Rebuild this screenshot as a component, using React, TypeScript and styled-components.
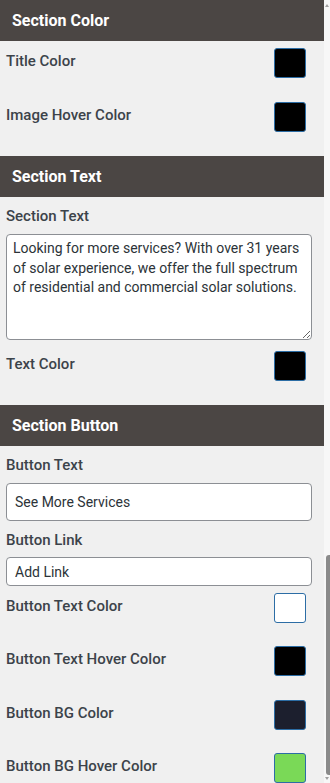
import React from "react";
import styled, { createGlobalStyle } from "styled-components";

const Global = createGlobalStyle`
  html, body { margin: 0; padding: 0; }
  body {
    width: 330px;
    height: 783px;
    overflow: hidden;
    background: #f6f6f6;
    font-family: Roboto, "Liberation Sans", Arial, sans-serif;
  }
  * { box-sizing: border-box; }
`;

const Frame = styled.div`
  display: flex;
  width: 330px;
  height: 783px;
  overflow: hidden;
`;

const Panel = styled.div`
  width: 324px;
  flex: none;
  background: #f0f0f0;
`;

const Track = styled.div`
  width: 6px;
  flex: none;
  background: #f7f7f7;
  display: flex;
  flex-direction: column;
  align-items: flex-end;
`;

const Arrow = styled.div<{ $up?: boolean }>`
  width: 0;
  height: 0;
  margin: ${(p) => (p.$up ? "4px 1px 0 0" : "auto 1px 3px 0")};
  border-left: 2px solid transparent;
  border-right: 2px solid transparent;
  ${(p) =>
    p.$up
      ? "border-bottom: 3px solid #a0a0a0;"
      : "border-top: 3px solid #a0a0a0;"}
`;

const Thumb = styled.div`
  width: 4px;
  height: 220px;
  margin-top: 548px;
  background: #8a8a8a;
  border-radius: 3px 0 0 3px;
`;

const Header = styled.div`
  height: 41px;
  background: #4b4644;
  color: #ffffff;
  font-size: 16px;
  font-weight: 700;
  display: flex;
  align-items: center;
  padding-left: 12px;
  padding-bottom: 1px;
`;

const Body = styled.div`
  padding: 0 12px 7px 6px;
`;

const Label = styled.div<{ $gap?: number }>`
  padding-top: 9px;
  line-height: 20px;
  margin-bottom: ${(p) => p.$gap ?? 8}px;
  font-size: 15px;
  font-weight: 500;
  color: #3c434a;
`;

const ColorRow = styled.div<{ $h: number }>`
  height: ${(p) => p.$h}px;
  display: flex;
  justify-content: space-between;
  align-items: flex-start;
  padding-right: 6px;
`;

const RowLabel = styled.span`
  padding-top: 10px;
  line-height: 20px;
  font-size: 15px;
  font-weight: 500;
  color: #3c434a;
`;

const Swatch = styled.div<{ $color: string }>`
  margin-top: 7px;
  width: 32px;
  height: 30px;
  border-radius: 3px;
  background: ${(p) => p.$color};
  border: 1px solid #2c6da5;
`;

const TextArea = styled.textarea`
  display: block;
  width: 306px;
  height: 106px;
  margin: 0 0 4px 0;
  padding: 4px 6px;
  border: 1px solid #8c8f94;
  border-radius: 4px;
  background: #fff;
  font-family: Roboto, "Liberation Sans", Arial, sans-serif;
  font-size: 14px;
  line-height: 19.5px;
  color: #2c3338;
  resize: vertical;
  outline: none;
`;

const Input = styled.input<{ $h: number }>`
  display: block;
  width: 306px;
  height: ${(p) => p.$h}px;
  margin: 0;
  padding: 0 8px;
  border: 1px solid #8c8f94;
  border-radius: 4px;
  background: #fff;
  font-family: Roboto, "Liberation Sans", Arial, sans-serif;
  font-size: 14px;
  color: #2c3338;
  outline: none;
`;

const Row = ({
  label,
  color,
  h = 54,
}: {
  label: string;
  color: string;
  h?: number;
}) => (
  <ColorRow $h={h}>
    <RowLabel>{label}</RowLabel>
    <Swatch $color={color} />
  </ColorRow>
);

export default function App() {
  return (
    <>
      <Global />
      <Frame>
        <Panel>
          <Header>Section Color</Header>
          <Body>
            <Row label="Title Color" color="#000000" />
            <Row label="Image Hover Color" color="#000000" />
          </Body>
          <Header>Section Text</Header>
          <Body>
            <Label>Section Text</Label>
            <TextArea
              defaultValue="Looking for more services? With over 31 years of solar experience, we offer the full spectrum of residential and commercial solar solutions."
            />
            <Row label="Text Color" color="#000000" />
          </Body>
          <Header>Section Button</Header>
          <Body>
            <Label>Button Text</Label>
            <Input $h={38} defaultValue="See More Services" />
            <Label $gap={7}>Button Link</Label>
            <Input $h={29} defaultValue="Add Link" />
            <Row label="Button Text Color" color="#ffffff" h={53.3} />
            <Row label="Button Text Hover Color" color="#000000" h={53.3} />
            <Row label="Button BG Color" color="#1c1f2e" h={53.3} />
            <Row label="Button BG Hover Color" color="#7ad957" h={53.3} />
          </Body>
        </Panel>
        <Track>
          <Arrow $up />
          <Thumb />
          <Arrow />
        </Track>
      </Frame>
    </>
  );
}
